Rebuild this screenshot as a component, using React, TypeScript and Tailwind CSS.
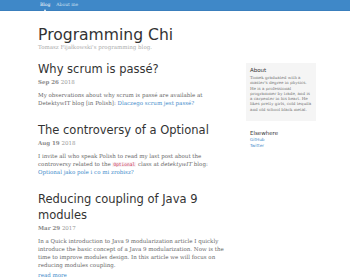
import React from "react"

const serif = { fontFamily: '"DejaVu Serif", serif' }

function Post({ title, month, year, children }: { title: string; month: string; year: string; children: React.ReactNode }) {
  return (
    <article className="mb-[15px]">
      <h2 className="font-['DejaVu_Sans',sans-serif] text-[11.5px] leading-[16px] text-[#333]">{title}</h2>
      <div className="mt-[1px] text-[5.5px] leading-[8px] text-[#999]">
        <span className="font-bold text-[#888]">{month}</span> {year}
      </div>
      <div className="mt-[5px] text-[5.5px] leading-[8px] text-[#666]">{children}</div>
    </article>
  )
}

export default function App() {
  return (
    <div className="min-h-[280px] w-[350px] overflow-hidden bg-white" style={serif}>
      {/* Navbar */}
      <nav className="h-[11px] bg-[#3f88c8] border-b border-[#3a7fbd]">
        <div className="flex h-full items-center gap-[6px] pl-[40px] font-['DejaVu_Serif',serif] text-[4.5px]">
          <span className="relative text-white">
            Blog
            <span className="absolute left-1/2 top-[7px] -ml-[1.5px] h-0 w-0 border-x-[1.5px] border-b-[2px] border-x-transparent border-b-white" />
          </span>
          <span className="text-[#cfe0f1]">About me</span>
        </div>
      </nav>

      <div className="flex pl-[38px] pr-[34px]">
        {/* Main column */}
        <main className="w-[192px]">
          <header className="pt-[14px] pb-[10px]">
            <h1 className="font-['DejaVu_Sans',sans-serif] text-[15.6px] leading-[20px] text-[#333]">Programming Chi</h1>
            <p className="-mt-[1px] text-[5.5px] leading-[7px] text-[#aaa]">Tomasz Fijałkowski's programming blog.</p>
          </header>

          <Post title="Why scrum is passé?" month="Sep 26" year="2018">
            <p>
              My observations about why scrum is passé are available at DetektywIT blog [in Polish]:{" "}
              <a className="text-[#428bca]">Dlaczego scrum jest passé?</a>
            </p>
          </Post>

          <Post title="The controversy of a Optional" month="Aug 19" year="2018">
            <p>
              I invite all who speak Polish to read my last post about the controversy related to the{" "}
              <code className="rounded-[1px] bg-[#f9f2f4] px-[1px] font-['DejaVu_Sans_Mono',monospace] text-[4.5px] leading-none text-[#c7254e]">Optional</code>{" "}
              class at <em>detektywIT</em> blog: <a className="text-[#428bca]">Optional jako pole i co mi zrobisz?</a>
            </p>
          </Post>

          <Post title="Reducing coupling of Java 9 modules" month="Mar 29" year="2017">
            <p>
              In a Quick introduction to Java 9 modularization article I quickly introduce the basic concept of a Java 9
              modularization. Now is the time to improve modules design. In this article we will focus on reducing modules
              coupling.
            </p>
            <p className="mt-[2px] text-[#428bca]">read more</p>
          </Post>
        </main>

        {/* Sidebar */}
        <aside className="ml-[16px] w-[70px] pt-[52px]">
          <div className="h-[58px] bg-[#f5f5f5] px-[4px] pt-[3px]">
            <h4 className="font-['DejaVu_Sans',sans-serif] text-[5.5px] leading-[8px] text-[#333]">About</h4>
            <p className="mt-[1px] text-[4.1px] leading-[5.3px] text-[#777]">
              Tomek graduated with a master's degree in physics. He is a professional programmer by trade, and is a
              carpenter in his heart. He likes pretty girls, cold tequila and old school black metal.
            </p>
          </div>
          <div className="px-[4px] pt-[8px]">
            <h4 className="font-['DejaVu_Sans',sans-serif] text-[5.5px] leading-[8px] text-[#333]">Elsewhere</h4>
            <ul className="font-['DejaVu_Sans',sans-serif] text-[4.2px] leading-[6px] text-[#428bca]">
              <li>GitHub</li>
              <li>Twitter</li>
            </ul>
          </div>
        </aside>
      </div>
    </div>
  )
}
